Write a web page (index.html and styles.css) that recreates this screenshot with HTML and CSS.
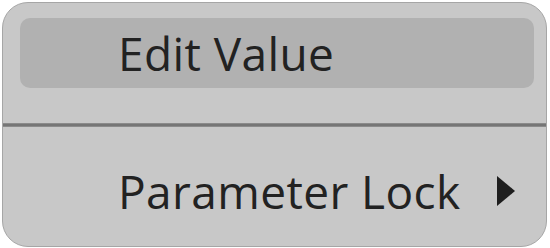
FILE: index.html
```html
<!DOCTYPE html>
<html>
<head>
<meta charset="utf-8">
<link rel="stylesheet" href="styles.css">
</head>
<body>
<div class="menu">
  <div class="item item-active"><span class="label">Edit Value</span></div>
  <div class="separator"></div>
  <div class="item item-sub">
    <span class="label">Parameter Lock</span>
    <svg class="arrow" width="20" height="32" viewBox="0 0 20 32"><polygon points="1,1 19,16 1,31" fill="#1e1e1e"/></svg>
  </div>
</div>
</body>
</html>
```
FILE: styles.css
```css
html, body {
  margin: 0;
  padding: 0;
  background: #ffffff;
}
.menu {
  box-sizing: border-box;
  margin: 2px 0 0 2px;
  width: 545px;
  height: 245px;
  background: #c8c8c8;
  border: 1px solid #a6a6a6;
  border-radius: 26px;
  display: flex;
  flex-direction: column;
  font-family: "Open Sans", "Noto Sans", sans-serif;
  color: #222222;
  overflow: hidden;
}
.item {
  box-sizing: border-box;
  height: 70px;
  margin: 0 12px 0 17px;
  padding-left: 98px;
  display: flex;
  align-items: center;
  font-size: 46px;
  letter-spacing: 0.4px;
  border-radius: 10px;
}
.item-active {
  margin-top: 15px;
  background: #b1b1b1;
}
.separator {
  margin-top: 35px;
  height: 4px;
  background: linear-gradient(#9a9a9a, #767676 30%, #767676 70%, #9a9a9a);
}
.item-sub {
  margin-top: 29px;
}
.label {
  line-height: 1;
}
.arrow {
  margin-left: auto;
  margin-right: 18px;
}
```
